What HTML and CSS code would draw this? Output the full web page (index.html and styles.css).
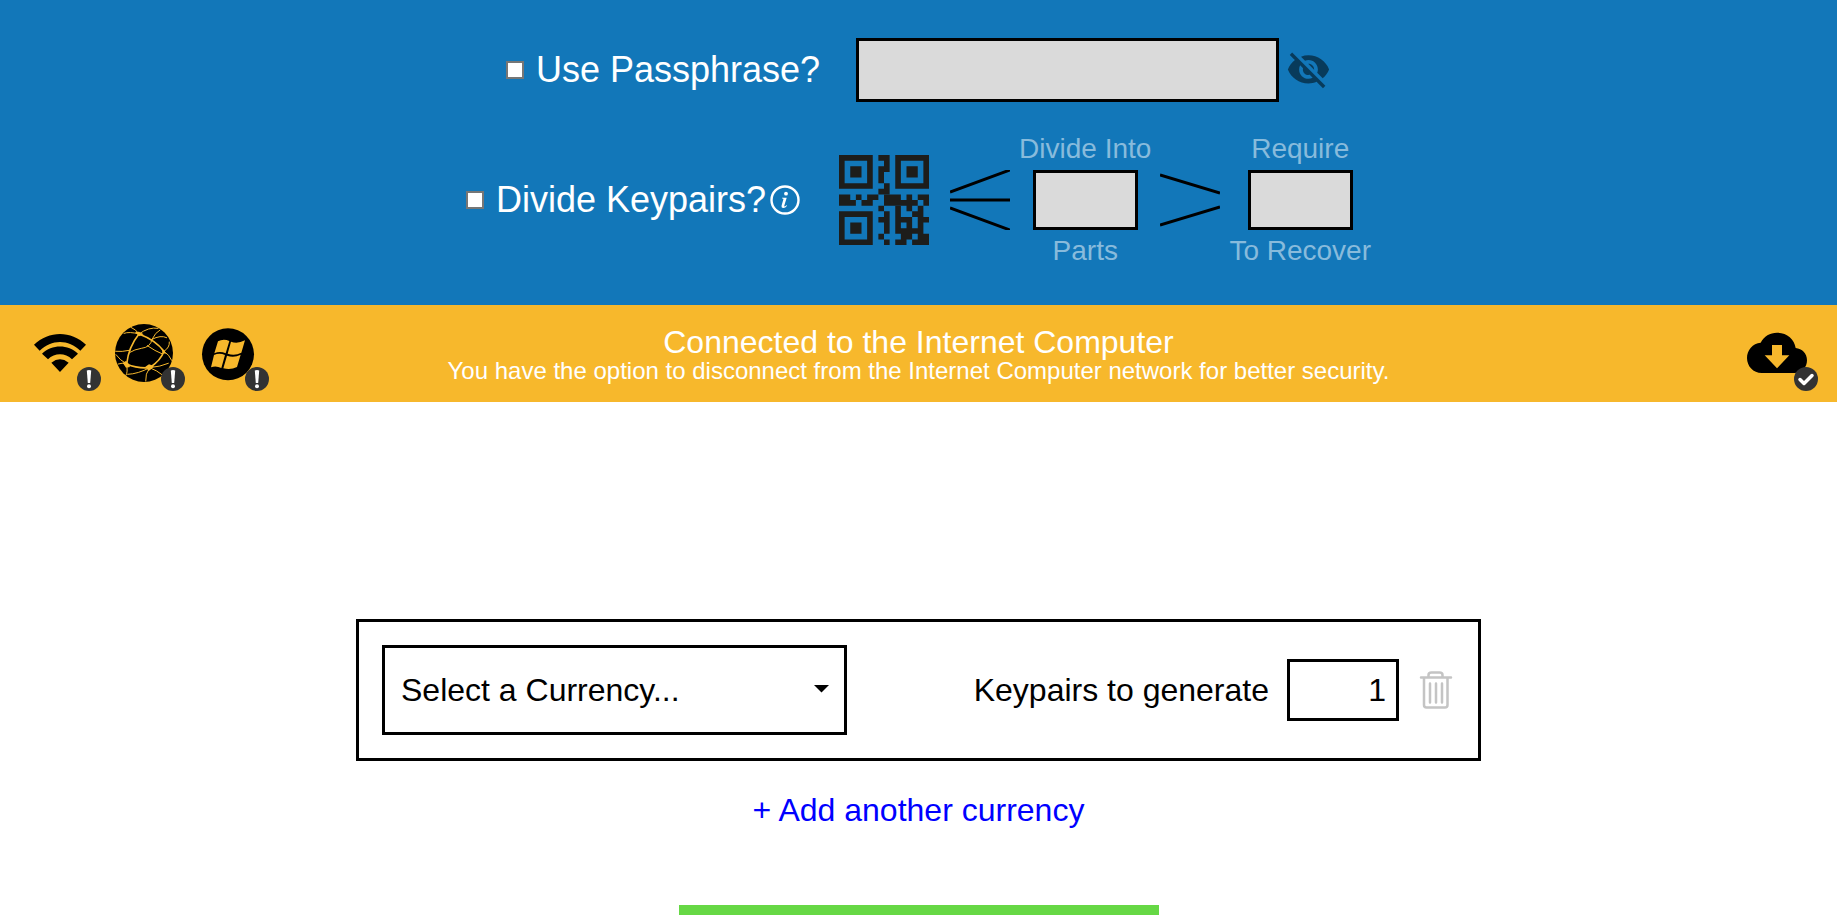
FILE: index.html
```html
<!DOCTYPE html>
<html lang="en">
<head>
<meta charset="utf-8">
<meta name="viewport" content="width=device-width, initial-scale=1">
<title>Keypair generator</title>
<link rel="stylesheet" href="styles.css">
</head>
<body>
<section class="options">
  <div class="option-row">
    <label class="check"><input type="checkbox" class="checkbox">Use Passphrase?</label>
    <div class="passphrase">
      <input type="text" class="field passphrase-field" aria-label="Passphrase" disabled>
      <button type="button" class="icon-button dimmed" aria-label="Show passphrase" disabled>
        <svg width="45" height="45" viewBox="0 .6 24 24"><path d="M12 7c2.76 0 5 2.240 5 5 0 .65-.13 1.260-.36 1.830l2.920 2.920c1.510-1.260 2.700-2.890 3.430-4.750-1.730-4.390-6-7.500-11-7.500-1.400 0-2.740.25-3.980.7l2.160 2.160C10.740 7.130 11.350 7 12 7zM2 4.270l2.280 2.280.46.46C3.080 8.300 1.780 10.020 1 12c1.730 4.390 6 7.500 11 7.500 1.550 0 3.030-.3 4.380-.84l.42.42L19.730 22 21 20.730 3.270 3 2 4.270zM7.530 9.800l1.550 1.550c-.05.21-.08.43-.08.65 0 1.660 1.340 3 3 3 .22 0 .44-.03.65-.08l1.550 1.550c-.67.33-1.410.53-2.200.53-2.760 0-5-2.240-5-5 0-.79.2-1.530.53-2.200zm4.310-.78l3.150 3.150.02-.16c0-1.660-1.340-3-3-3l-.17.01z"/></svg>
      </button>
    </div>
  </div>
  <div class="option-row divide-row">
    <div class="check-group">
      <label class="check"><input type="checkbox" class="checkbox">Divide Keypairs?</label>
      <button type="button" class="icon-button" aria-label="About dividing keypairs">
        <svg width="30" height="30" viewBox="0 0 30 30"><circle cx="15" cy="15" r="13.500" fill="none" stroke="#fff" stroke-width="2.400"/><circle cx="16" cy="8.700" r="1.900" fill="#fff"/><path d="M12 12.700h4.700L14.300 20.500q-.2 1 .5.900.8-.1 1.600-1.200l.7.5q-2 2.600-4.200 2.300-1.900-.3-1.300-2.500l1.800-6.300q.1-.7-.6-.7H12z" fill="#fff"/></svg>
      </button>
    </div>
    <div class="split">
      <svg class="qr" width="90" height="90" viewBox="0 0 16 16" aria-hidden="true" fill="#1d1d1b">
        <path fill-rule="evenodd" d="M0 0h6v6H0zM1 1v4h4V1zM2 2h2v2H2zM10 0h6v6h-6zM11 1v4h4V1zM12 2h2v2h-2zM0 10h6v6H0zM1 11v4h4v-4zM2 12h2v2H2z"/>
        <path d="M7 0h2v3H8v2H7V2h1V1H7zM8 5h1v2H7V6h1z"/>
        <path d="M0 7h2v2H0zM2 8h1v1H2zM3 7h1v1H3zM4 8h2v1H4zM5 7h2v1H5zM8 7h3v2H8zM11 8h3v1h-3zM12 7h1v3h-1zM14 7h2v1h-2zM15 8h1v1h-1z"/>
        <path d="M7 9h1v1H7zM8 10h1v4H8zM7 11h1v1H7zM7 14h1v1H7zM8 15h1v1H8z"/>
        <path d="M10 9h1v5h-1zM11 11h2v1h-2zM12 12h1v1h-1zM11 13h3v1h-3zM11 14h2v1h-2zM10 15h2v1h-2zM14 9h1v5h-1zM13 10h1v1h-1zM15 11h1v1h-1zM14 14h2v1h-2zM13 15h3v1h-3z"/>
      </svg>
      <svg class="fan" width="60" height="60" viewBox="0 0 60 60" aria-hidden="true" fill="none" stroke="#000" stroke-width="3"><path d="M0 22 60 0M0 30h60M0 38l60 22"/></svg>
      <div class="part">
        <label for="parts">Divide Into</label>
        <input id="parts" type="text" class="field part-field" disabled>
        <label for="parts">Parts</label>
      </div>
      <svg width="60" height="60" viewBox="0 0 60 60" aria-hidden="true" fill="none" stroke="#000" stroke-width="3"><path d="M0 5l60 18M0 55l60-18"/></svg>
      <div class="part">
        <label for="required">Require</label>
        <input id="required" type="text" class="field part-field" disabled>
        <label for="required">To Recover</label>
      </div>
    </div>
  </div>
</section>

<section class="status">
  <div class="status-icons">
    <div class="status-icon">
      <svg width="60" height="60" viewBox="90 72 180 180" aria-hidden="true"><path d="M102 134C147 91 213 91 258 134L241 152C206 117 154 117 119 152zM126 161C156 132 204 132 234 161L216 178C196 158 164 158 144 178zM154 188Q180 168 206 188L180 216z"/></svg>
      <svg class="badge" width="24" height="24" viewBox="0 0 24 24" aria-hidden="true"><circle cx="12" cy="12" r="12" fill="#333"/><path d="M9.800 3.500q2.200-1 4.400 0l-1 12.500h-2.400z" fill="#fff"/><circle cx="12" cy="19.300" r="2" fill="#fff"/></svg>
    </div>
    <div class="status-icon">
      <svg width="60" height="60" viewBox="342 72 180 180" aria-hidden="true"><circle cx="432" cy="159" r="87"/><g fill="none" stroke="#f7b82c" stroke-linecap="round" stroke-linejoin="round"><path stroke-width="5" d="M417 102Q386 140 380 192Q412 206 449 203Q482 182 492 154Q466 120 417 102"/><path stroke-width="3" d="M417 102Q388 94 372 100M417 102Q408 88 393 82M417 102Q446 80 474 85M456 118Q466 97 480 90M456 118Q482 104 500 113M456 118Q452 142 424 145Q404 148 388 158M347 154Q366 156 388 151M380 192Q360 181 348 164M380 192Q366 187 354 192M380 192Q384 218 378 226M449 203Q414 222 383 223M449 203Q435 222 437 243M449 203Q472 212 486 224M449 203Q482 200 505 190M442 137Q465 153 487 162M492 154Q510 142 508 126M492 154Q508 164 515 181"/></g><g fill="#f7b82c"><path d="M405 96l12-1 14 8-14 6zM368 188l10-5 8 8 4 10-12 2zM436 200l11-7 15 5-8 9-8 6zM484 145l10 8 4 8-10-1z"/></g></svg>
      <svg class="badge" width="24" height="24" viewBox="0 0 24 24" aria-hidden="true"><circle cx="12" cy="12" r="12" fill="#333"/><path d="M9.800 3.500q2.200-1 4.400 0l-1 12.500h-2.400z" fill="#fff"/><circle cx="12" cy="19.300" r="2" fill="#fff"/></svg>
    </div>
    <div class="status-icon">
      <svg width="60" height="60" viewBox="594 72 180 180" aria-hidden="true"><circle cx="684" cy="163" r="78"/><path fill="#f7b82c" d="M654 124Q670 115 688 123L677 160Q660 152 643 160zM693 125Q712 133 735 121L724 158Q704 169 683 161zM642 165Q658 157 675 165L664 204Q648 196 633 202zM681 167Q702 175 722 164L711 201Q692 211 670 205z"/></svg>
      <svg class="badge" width="24" height="24" viewBox="0 0 24 24" aria-hidden="true"><circle cx="12" cy="12" r="12" fill="#333"/><path d="M9.800 3.500q2.200-1 4.400 0l-1 12.500h-2.400z" fill="#fff"/><circle cx="12" cy="19.300" r="2" fill="#fff"/></svg>
    </div>
  </div>
  <div class="status-text">
    <div class="status-title">Connected to the Internet Computer</div>
    <div class="status-note">You have the option to disconnect from the Internet Computer network for better security.</div>
  </div>
  <div class="status-icons status-end">
    <div class="status-icon">
      <svg width="60" height="60" viewBox="141 72 180 180" aria-hidden="true"><path fill-rule="evenodd" d="M185 219C160 219 141 199 141 174C141 150 158 130 182 128C192 108 210 98 231 98C260 98 283 117 287 144C306 146 321 160 321 181C321 202 306 219 284 219zM216 135V166H194L231 205L268 166H246V135z"/></svg>
      <svg class="badge" width="24" height="24" viewBox="0 0 24 24" aria-hidden="true"><circle cx="12" cy="12" r="12" fill="#333"/><path d="M6 12.500l4 4 8-8" fill="none" stroke="#fff" stroke-width="3.500" stroke-linecap="round" stroke-linejoin="round"/></svg>
    </div>
  </div>
</section>

<main class="generator">
  <div class="currency-card">
    <div class="select-wrap">
      <select class="currency-select" aria-label="Currency"><option>Select a Currency...</option></select>
      <svg class="caret" width="15" height="8" viewBox="0 0 15 8" aria-hidden="true"><path d="M0 0h15L7.500 7.500z"/></svg>
    </div>
    <div class="quantity">
      <label for="count">Keypairs to generate</label>
      <input id="count" type="text" inputmode="numeric" class="count-field" value="1">
      <button type="button" class="icon-button" aria-label="Remove currency">
        <svg width="38" height="38" viewBox="0 0 38 38" fill="none" stroke="#c4c4c4" stroke-width="2.500" stroke-linecap="round"><path d="M4 6.500h30M11.500 6V4q0-2.500 3-2.500h8q3 0 3 2.500v2M7 7v27q0 2.500 2.500 2.500h18.500q2.500 0 2.500-2.500V7M13 12.500v19M19 12.500v19M25 12.500v19"/></svg>
      </button>
    </div>
  </div>
  <a class="add-link" href="#">+ Add another currency</a>
  <button type="button" class="generate" aria-label="Generate"></button>
</main>
</body>
</html>
```
FILE: styles.css
```css
* {
  box-sizing: border-box;
}

html {
  scrollbar-width: none;
}

body {
  margin: 0;
  background: #fff;
  color: #000;
  font-family: "Liberation Sans", Arial, sans-serif;
  font-size: 32px;
}

input,
select,
button {
  font: inherit;
  color: inherit;
  margin: 0;
  border-radius: 0;
}

svg {
  display: block;
}

.options {
  display: flex;
  flex-direction: column;
  gap: 31px;
  padding: 38px 24px;
  background: #1277b9;
  color: #fff;
}

.option-row {
  display: flex;
  align-items: center;
  justify-content: center;
  gap: 36px;
}

.divide-row {
  gap: 39px;
}

.check {
  display: flex;
  align-items: center;
  gap: 12px;
  font-size: 36px;
  line-height: 42px;
}

.checkbox {
  appearance: none;
  width: 18px;
  height: 18px;
  border: 2px solid #767676;
  background: #fff;
}

.check-group {
  display: flex;
  align-items: center;
  gap: 4px;
}

.passphrase {
  display: flex;
  align-items: center;
  gap: 7px;
}

.field {
  border: 3px solid #000;
  background: #dadada;
  padding: 0 12px;
}

.passphrase-field {
  width: 423px;
  height: 64px;
}

.icon-button {
  border: 0;
  padding: 0;
  background: none;
}

.dimmed {
  opacity: 0.5;
}

.split {
  display: flex;
  align-items: center;
  gap: 9px;
}

.fan {
  margin-left: 12px;
}

.part {
  display: flex;
  flex-direction: column;
  align-items: center;
  gap: 5px;
  font-size: 28px;
  line-height: 32px;
  color: #88bbdc;
}

.part-field {
  width: 105px;
  height: 60px;
}

.status {
  display: grid;
  grid-template-columns: 1fr auto 1fr;
  align-items: center;
  padding: 19px 30px 18px;
  background: #f7b82c;
}

.status-icons {
  display: flex;
  gap: 24px;
}

.status-end {
  justify-content: flex-end;
}

.status-icon {
  position: relative;
}

.badge {
  position: absolute;
  top: 43px;
  left: 47px;
}

.status-text {
  color: #fff;
  text-align: center;
}

.status-title {
  font-size: 32px;
  line-height: 34px;
}

.status-note {
  font-size: 24px;
  line-height: 24px;
}

.generator {
  display: flex;
  flex-direction: column;
  align-items: center;
  padding: 217px 24px 0;
}

.currency-card {
  display: flex;
  align-items: center;
  justify-content: space-between;
  width: 100%;
  max-width: 1125px;
  padding: 23px;
  border: 3px solid #000;
}

.select-wrap {
  position: relative;
  width: 465px;
}

.currency-select {
  appearance: none;
  width: 100%;
  height: 90px;
  padding: 0 48px 0 16px;
  border: 3px solid #000;
  background: #fff;
}

.caret {
  position: absolute;
  top: 40px;
  right: 18px;
  pointer-events: none;
}

.quantity {
  display: flex;
  align-items: center;
  gap: 18px;
}

.count-field {
  width: 112px;
  height: 62px;
  padding: 0 10px;
  border: 3px solid #000;
  background: #fff;
  text-align: right;
}

.add-link {
  margin-top: 31px;
  line-height: 36px;
  color: #00f;
  text-decoration: none;
}

.generate {
  width: 480px;
  height: 90px;
  margin-top: 77px;
  border: 0;
  background: #66d845;
}
```
